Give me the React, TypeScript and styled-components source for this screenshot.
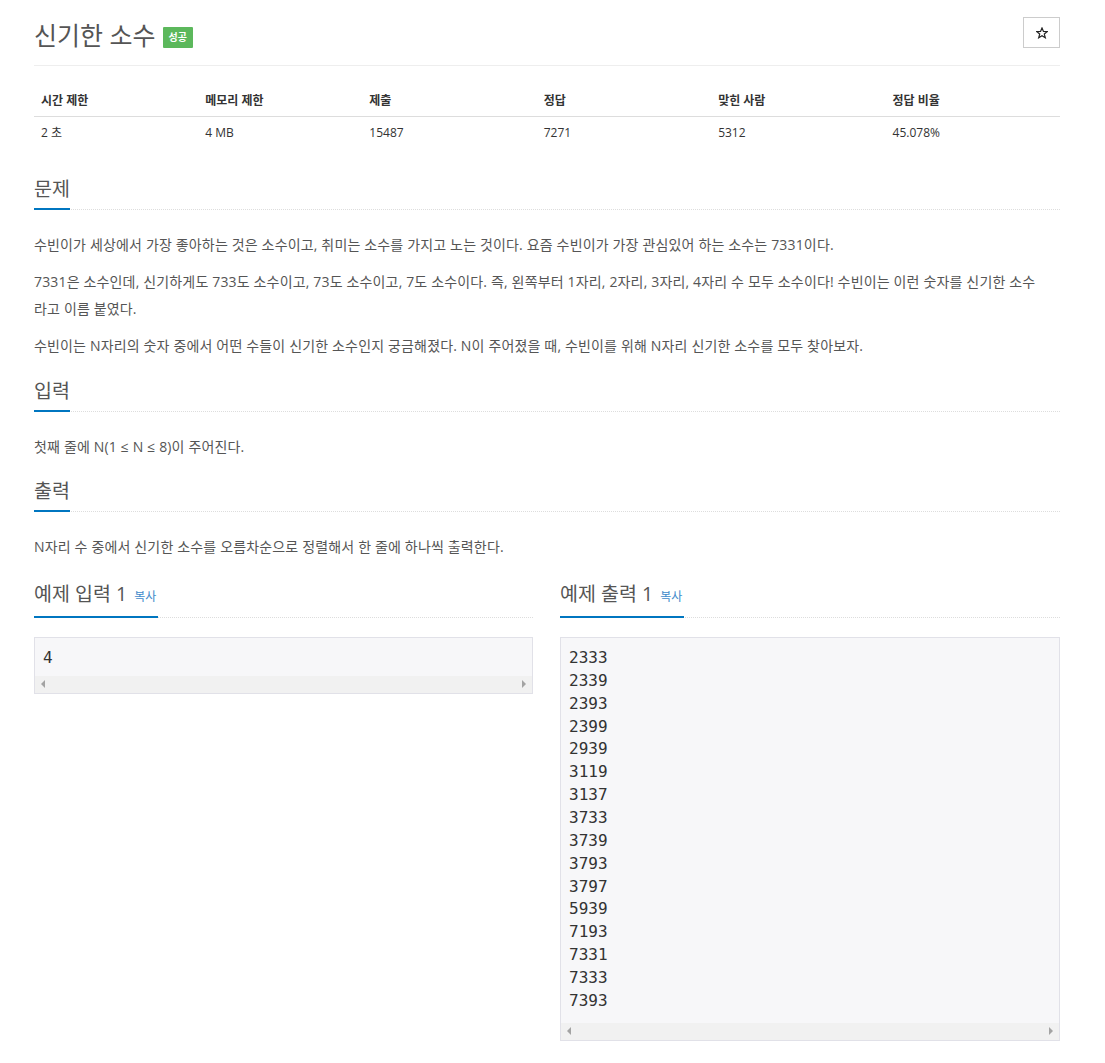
import styled, { createGlobalStyle } from 'styled-components';

const GlobalStyle = createGlobalStyle`
  body {
    margin: 0;
    background: #fff;
    color: #555;
    font-family: "Open Sans", "Noto Sans CJK KR", sans-serif;
    font-size: 14px;
  }
`;

const stats = [
  { label: '시간 제한', value: '2 초', width: '16%' },
  { label: '메모리 제한', value: '4 MB', width: '16%' },
  { label: '제출', value: '15487', width: '17%' },
  { label: '정답', value: '7271', width: '17%' },
  { label: '맞힌 사람', value: '5312', width: '17%' },
  { label: '정답 비율', value: '45.078%', width: '17%' },
];

const outputLines = [
  '2333', '2339', '2393', '2399', '2939', '3119', '3137', '3733',
  '3739', '3793', '3797', '5939', '7193', '7331', '7333', '7393',
];

const StarIcon = () => (
  <svg width="12" height="12" viewBox="0 0 24 24" fill="none" stroke="#222" strokeWidth="2.4" strokeLinejoin="miter">
    <polygon points="12,2 14.9,9 22.5,9.3 16.6,14.1 18.6,21.5 12,17.3 5.4,21.5 7.4,14.1 1.5,9.3 9.1,9" />
  </svg>
);

const Sample = ({ title, text, tall }: { title: string; text: string; tall?: boolean }) => (
  <div>
    <SampleHeadline>
      <HeadTitle>
        {title} <CopyLink>복사</CopyLink>
      </HeadTitle>
    </SampleHeadline>
    <SampleBox>
      <SampleText $tall={tall}>{text}</SampleText>
      <ScrollTrack>
        <Arrow $dir="left" />
        <Arrow $dir="right" />
      </ScrollTrack>
    </SampleBox>
  </div>
);

const App = () => {
  return (
    <Page>
      <GlobalStyle />
      <Header>
        <Title>
          신기한 소수 <Badge>성공</Badge>
        </Title>
        <StarButton>
          <StarIcon />
        </StarButton>
      </Header>

      <StatsTable>
        <thead>
          <tr>
            {stats.map((s) => (
              <Th key={s.label} style={{ width: s.width }}>
                {s.label}
              </Th>
            ))}
          </tr>
        </thead>
        <tbody>
          <tr>
            {stats.map((s) => (
              <Td key={s.label}>{s.value}</Td>
            ))}
          </tr>
        </tbody>
      </StatsTable>

      <Headline $first>
        <HeadTitle>문제</HeadTitle>
      </Headline>
      <Text>
        수빈이가 세상에서 가장 좋아하는 것은 소수이고, 취미는 소수를 가지고 노는 것이다. 요즘 수빈이가 가장 관심있어 하는 소수는 7331이다.
      </Text>
      <Text>
        7331은 소수인데, 신기하게도 733도 소수이고, 73도 소수이고, 7도 소수이다. 즉, 왼쪽부터 1자리, 2자리, 3자리, 4자리 수 모두 소수이다! 수빈이는 이런 숫자를 신기한 소수라고 이름 붙였다.
      </Text>
      <Text>
        수빈이는 N자리의 숫자 중에서 어떤 수들이 신기한 소수인지 궁금해졌다. N이 주어졌을 때, 수빈이를 위해 N자리 신기한 소수를 모두 찾아보자.
      </Text>

      <Headline>
        <HeadTitle>입력</HeadTitle>
      </Headline>
      <Text>첫째 줄에 N(1 ≤ N ≤ 8)이 주어진다.</Text>

      <Headline>
        <HeadTitle>출력</HeadTitle>
      </Headline>
      <Text>N자리 수 중에서 신기한 소수를 오름차순으로 정렬해서 한 줄에 하나씩 출력한다.</Text>

      <SampleGrid>
        <Sample title="예제 입력 1" text="4" />
        <Sample title="예제 출력 1" text={outputLines.join('\n')} tall />
      </SampleGrid>
    </Page>
  );
};

const Page = styled.div`
  width: 1026px;
  margin-left: 34px;
  padding-bottom: 22px;
`;

const Header = styled.div`
  display: flex;
  justify-content: space-between;
  align-items: flex-start;
  padding: 17px 0 12px;
  border-bottom: 1px solid #eee;
`;

const Title = styled.h1`
  margin: 0;
  font-size: 25px;
  font-weight: 400;
  line-height: 36px;
  color: #555;
  display: flex;
  align-items: center;
`;

const Badge = styled.span`
  display: inline-block;
  margin-left: 7px;
  margin-top: 4px;
  background: #5cb85c;
  color: #fff;
  font-size: 10px;
  font-weight: 700;
  line-height: 21px;
  padding: 0 6px;
  border-radius: 1px;
`;

const StarButton = styled.button`
  width: 37px;
  height: 31px;
  display: flex;
  align-items: center;
  justify-content: center;
  background: #fff;
  border: 1px solid #ccc;
  padding: 0;
`;

const StatsTable = styled.table`
  width: 100%;
  border-collapse: collapse;
  margin-top: 18px;
  font-size: 12px;
`;

const Th = styled.th`
  text-align: left;
  font-weight: 700;
  color: #333;
  padding: 8px 7px 6px;
  line-height: 18px;
  border-bottom: 1px solid #ddd;
`;

const Td = styled.td`
  color: #333;
  padding: 7px 7px;
  line-height: 18px;
`;

const Headline = styled.div<{ $first?: boolean }>`
  margin-top: ${(p) => (p.$first ? '27px' : '18.5px')};
  margin-bottom: 21px;
  border-bottom: 1px dotted #ddd;
`;

const SampleHeadline = styled(Headline)`
  margin-top: 11px;
  margin-bottom: 19px;
`;

const HeadTitle = styled.h2`
  display: inline-block;
  margin: 0 0 -1px;
  font-size: 19.5px;
  font-weight: 400;
  line-height: 26px;
  color: #555;
  padding-bottom: 6px;
  border-bottom: 2px solid #0076c0;
`;

const CopyLink = styled.span`
  font-size: 12px;
  color: #428bca;
  margin-left: 2px;
  padding-right: 2px;
`;

const Text = styled.p`
  max-width: 1010px;
  margin: 0 0 10px;
  font-size: 14px;
  letter-spacing: 0.16px;
  line-height: 27px;
  color: #555;
`;

const SampleGrid = styled.div`
  display: grid;
  grid-template-columns: 499px 500px;
  column-gap: 27px;
  align-items: start;
`;

const SampleBox = styled.div`
  border: 1px solid #e1e1e8;
  background: #f7f7f9;
`;

const SampleText = styled.pre<{ $tall?: boolean }>`
  margin: 0;
  padding: 9px 8px ${(p) => (p.$tall ? '10px' : '6px')};
  font-family: "DejaVu Sans Mono", "Liberation Mono", monospace;
  font-size: 16px;
  line-height: 22.86px;
  color: #333;
`;

const ScrollTrack = styled.div`
  height: 17px;
  background: #f1f1f1;
  display: flex;
  align-items: center;
  justify-content: space-between;
  padding: 0 6px;
`;

const Arrow = styled.span<{ $dir: 'left' | 'right' }>`
  width: 0;
  height: 0;
  border-top: 4px solid transparent;
  border-bottom: 4px solid transparent;
  ${(p) =>
    p.$dir === 'left'
      ? 'border-right: 4px solid #a3a3a3;'
      : 'border-left: 4px solid #a3a3a3;'}
`;

export default App;
